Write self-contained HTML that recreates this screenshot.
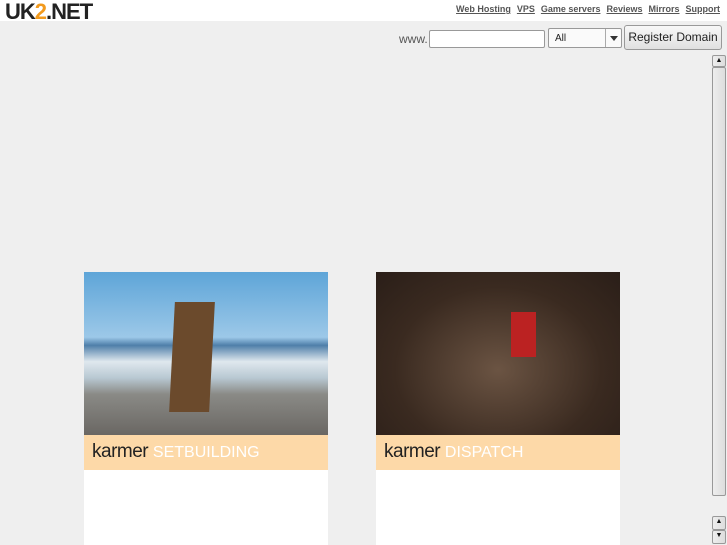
<!DOCTYPE html>
<html><head><style>
*{margin:0;padding:0;box-sizing:border-box}
body{width:727px;height:545px;background:#efefef;position:relative;overflow:hidden;font-family:"Liberation Sans",sans-serif}
.top{position:absolute;left:0;top:0;width:727px;height:21px;background:#fff}
.logo{position:absolute;left:5px;top:-1px;font-size:22px;font-weight:bold;letter-spacing:-1px;color:#222}
.logo b{color:#f29a1d}
.nav{position:absolute;right:7px;top:4px;font-size:9px;font-weight:bold;color:#555}
.nav a{color:#555;text-decoration:underline;margin-left:6px}
.www{position:absolute;left:399px;top:32px;font-size:12px;color:#555}
.inp{position:absolute;left:429px;top:30px;width:116px;height:18px;background:#fff;border:1px solid #999;border-radius:2px}
.sel{position:absolute;left:548px;top:28px;width:74px;height:20px;background:#fafafa;border:1px solid #999;border-radius:2px;font-size:10px;padding:4px 6px;color:#222}
.sel i{position:absolute;right:0;top:0;width:16px;height:18px;border-left:1px solid #aaa}
.sel i:after{content:"";position:absolute;left:4px;top:7px;border:4px solid transparent;border-top:5px solid #333}
.btn{position:absolute;left:624px;top:25px;width:98px;height:25px;background:linear-gradient(#f8f8f8,#e0e0e0);border:1px solid #999;border-radius:3px;font-size:12px;color:#222;text-align:center;line-height:23px}
.card{position:absolute;top:272px;width:244px;height:273px;background:#fff}
.img{height:163px}
.band{height:35px;background:#fdd9a8;font-size:19px;padding:6px 0 0 8px;color:#222;letter-spacing:-.5px}
.band span{color:#fff;font-size:16px;letter-spacing:0}
.sb{position:absolute;left:712px;width:14px;background:linear-gradient(90deg,#eee,#ddd);border:1px solid #999;border-radius:2px}
.ar{font-size:7px;color:#111;text-align:center;line-height:10px}
</style></head><body>
<div class="top"></div>
<div class="logo">UK<b>2</b>.NET</div>
<div class="nav"><a>Web Hosting</a><a>VPS</a><a>Game servers</a><a>Reviews</a><a>Mirrors</a><a>Support</a></div>
<div class="www">www.</div>
<div class="inp"></div>
<div class="sel">All<i></i></div>
<div class="btn">Register Domain</div>
<div class="card" style="left:84px">
<div class="img" style="background:linear-gradient(180deg,#5ea5d8 0%,#9cc8e8 40%,#4f7fa9 45%,#dfe8ee 55%,#b8c8d2 65%,#8a8a86 75%,#6a6763 100%);position:relative"><div style="position:absolute;left:88px;top:30px;width:40px;height:110px;background:#6b4a2c;transform:skewX(-3deg)"></div></div>
<div class="band">karmer <span>SETBUILDING</span></div></div>
<div class="card" style="left:376px">
<div class="img" style="background:radial-gradient(ellipse at 50% 60%,#6b5443,#3a2a20 60%,#2a1e18);position:relative"><div style="position:absolute;left:135px;top:40px;width:25px;height:45px;background:#b22"></div></div>
<div class="band">karmer <span>DISPATCH</span></div></div>
<div class="sb ar" style="top:55px;height:12px">▲</div>
<div class="sb" style="top:67px;height:429px"></div>
<div class="sb ar" style="top:516px;height:14px">▲</div>
<div class="sb ar" style="top:530px;height:14px">▼</div>
</body></html>
